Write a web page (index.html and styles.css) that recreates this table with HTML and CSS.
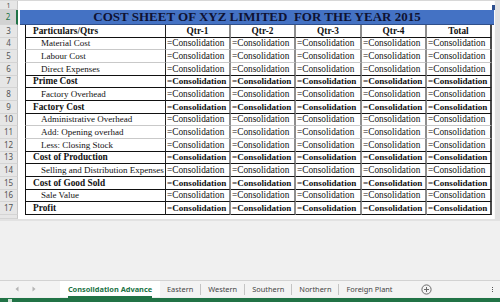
FILE: index.html
```html
<!DOCTYPE html>
<html>
<head>
<meta charset="utf-8">
<link rel="stylesheet" href="styles.css">
</head>
<body>
<div class="app">
  <div class="sheet">
    <div class="row r1"><div class="rh">1</div><div class="blank"></div><div class="edge"></div></div>
    <div class="row r2"><div class="rh sel">2</div><div class="title">COST SHEET OF XYZ LIMITED&nbsp; FOR THE YEAR 2015<span class="handle"></span></div><div class="edge"></div></div>
    <div class="row dr dk hd"><div class="rh">3</div><div class="a"></div><div class="lb b">Particulars/Qtrs</div><div class="v">Qtr-1</div><div class="v">Qtr-2</div><div class="v">Qtr-3</div><div class="v">Qtr-4</div><div class="v t">Total</div><div class="pad"></div><div class="edge"></div></div>
    <div class="row dr"><div class="rh">4</div><div class="a"></div><div class="lb s">Material Cost</div><div class="v">=Consolidation</div><div class="v">=Consolidation</div><div class="v">=Consolidation</div><div class="v">=Consolidation</div><div class="v t">=Consolidation</div><div class="pad"></div><div class="edge"></div></div>
    <div class="row dr"><div class="rh">5</div><div class="a"></div><div class="lb s">Labour Cost</div><div class="v">=Consolidation</div><div class="v">=Consolidation</div><div class="v">=Consolidation</div><div class="v">=Consolidation</div><div class="v t">=Consolidation</div><div class="pad"></div><div class="edge"></div></div>
    <div class="row dr dk"><div class="rh">6</div><div class="a"></div><div class="lb s">Direct Expenses</div><div class="v">=Consolidation</div><div class="v">=Consolidation</div><div class="v">=Consolidation</div><div class="v">=Consolidation</div><div class="v t">=Consolidation</div><div class="pad"></div><div class="edge"></div></div>
    <div class="row dr dk bo"><div class="rh">7</div><div class="a"></div><div class="lb b">Prime Cost</div><div class="v">=Consolidation</div><div class="v">=Consolidation</div><div class="v">=Consolidation</div><div class="v">=Consolidation</div><div class="v t">=Consolidation</div><div class="pad"></div><div class="edge"></div></div>
    <div class="row dr dk"><div class="rh">8</div><div class="a"></div><div class="lb s">Factory Overhead</div><div class="v">=Consolidation</div><div class="v">=Consolidation</div><div class="v">=Consolidation</div><div class="v">=Consolidation</div><div class="v t">=Consolidation</div><div class="pad"></div><div class="edge"></div></div>
    <div class="row dr dk bo"><div class="rh">9</div><div class="a"></div><div class="lb b">Factory Cost</div><div class="v">=Consolidation</div><div class="v">=Consolidation</div><div class="v">=Consolidation</div><div class="v">=Consolidation</div><div class="v t">=Consolidation</div><div class="pad"></div><div class="edge"></div></div>
    <div class="row dr"><div class="rh">10</div><div class="a"></div><div class="lb s">Administrative Overhead</div><div class="v">=Consolidation</div><div class="v">=Consolidation</div><div class="v">=Consolidation</div><div class="v">=Consolidation</div><div class="v t">=Consolidation</div><div class="pad"></div><div class="edge"></div></div>
    <div class="row dr"><div class="rh">11</div><div class="a"></div><div class="lb s">Add: Opening overhad</div><div class="v">=Consolidation</div><div class="v">=Consolidation</div><div class="v">=Consolidation</div><div class="v">=Consolidation</div><div class="v t">=Consolidation</div><div class="pad"></div><div class="edge"></div></div>
    <div class="row dr dk"><div class="rh">12</div><div class="a"></div><div class="lb s">Less: Closing Stock</div><div class="v">=Consolidation</div><div class="v">=Consolidation</div><div class="v">=Consolidation</div><div class="v">=Consolidation</div><div class="v t">=Consolidation</div><div class="pad"></div><div class="edge"></div></div>
    <div class="row dr dk bo"><div class="rh">13</div><div class="a"></div><div class="lb b">Cost of Production</div><div class="v">=Consolidation</div><div class="v">=Consolidation</div><div class="v">=Consolidation</div><div class="v">=Consolidation</div><div class="v t">=Consolidation</div><div class="pad"></div><div class="edge"></div></div>
    <div class="row dr dk"><div class="rh">14</div><div class="a"></div><div class="lb s">Selling and Distribution Expenses</div><div class="v">=Consolidation</div><div class="v">=Consolidation</div><div class="v">=Consolidation</div><div class="v">=Consolidation</div><div class="v t">=Consolidation</div><div class="pad"></div><div class="edge"></div></div>
    <div class="row dr dk bo"><div class="rh">15</div><div class="a"></div><div class="lb b">Cost of Good Sold</div><div class="v">=Consolidation</div><div class="v">=Consolidation</div><div class="v">=Consolidation</div><div class="v">=Consolidation</div><div class="v t">=Consolidation</div><div class="pad"></div><div class="edge"></div></div>
    <div class="row dr dk"><div class="rh">16</div><div class="a"></div><div class="lb s">Sale Value</div><div class="v">=Consolidation</div><div class="v">=Consolidation</div><div class="v">=Consolidation</div><div class="v">=Consolidation</div><div class="v t">=Consolidation</div><div class="pad"></div><div class="edge"></div></div>
    <div class="row dr dk bo"><div class="rh">17</div><div class="a"></div><div class="lb b">Profit</div><div class="v">=Consolidation</div><div class="v">=Consolidation</div><div class="v">=Consolidation</div><div class="v">=Consolidation</div><div class="v t">=Consolidation</div><div class="pad"></div><div class="edge"></div></div>
    <div class="row r18"><div class="rh"></div><div class="blank"></div><div class="edge"></div></div>
  </div>
  <div class="filler"></div>
  <div class="tabs">
    <div class="nav">
      <svg width="4" height="6" viewBox="0 0 4 6"><path d="M3.5 0.5 L0.5 3 L3.5 5.5 Z" fill="#b4b4b4"/></svg>
      <svg width="4" height="6" viewBox="0 0 4 6"><path d="M0.5 0.5 L3.5 3 L0.5 5.5 Z" fill="#b4b4b4"/></svg>
    </div>
    <div class="tab active"><span>Consolidation Advance</span></div>
    <div class="tab">Eastern</div>
    <div class="tab">Western</div>
    <div class="tab">Southern</div>
    <div class="tab">Northern</div>
    <div class="tab">Foreign Plant</div>
    <div class="add">
      <svg width="11" height="11" viewBox="0 0 11 11"><circle cx="5.5" cy="5.5" r="4.6" fill="none" stroke="#6a6a6a" stroke-width="1"/><path d="M5.5 3 V8 M3 5.5 H8" stroke="#6a6a6a" stroke-width="1"/></svg>
    </div>
    <div class="more"><i></i><i></i><i></i></div>
  </div>
  <div class="status"><span class="mark"></span></div>
</div>
</body>
</html>
```

FILE: styles.css
```css
* { box-sizing: border-box; }
html, body { margin: 0; padding: 0; }
body {
  width: 500px;
  height: 302px;
  overflow: hidden;
  background: #f0f0f0;
}
.app {
  display: flex;
  flex-direction: column;
  width: 500px;
  height: 302px;
}
.sheet {
  display: flex;
  flex-direction: column;
  background: #fff;
  border-top: 1px solid #d8d8d8;
}
.row {
  display: grid;
  grid-template-columns: 18px 7px 141px 65px 65px 66px 65px 65px 2px 6px;
}
.r1 { height: 9px; }
.r1 .blank, .r18 .blank { grid-column: 2 / span 8; background: #fff; }
.r2 { height: 15px; }
.dr { height: 12.67px; }
.r18 { height: 4px; overflow: hidden; }
.rh {
  background: #e6e6e6;
  border-right: 1px solid #c8c8c8;
  border-bottom: 1px solid #d4d4d4;
  font-family: "Noto Sans", sans-serif;
  font-size: 8px;
  line-height: 1;
  color: #555;
  text-align: center;
  display: flex;
  align-items: center;
  justify-content: center;
  overflow: hidden;
}
.r1 .rh { font-size: 7px; overflow: visible; }
.rh.sel {
  background: #d2d2d2;
  color: #217346;
  border-right: 2px solid #217346;
}
.edge { background: #e2e2e2; border-left: 1px solid #fafafa; }
.title {
  grid-column: 2 / span 8;
  margin-left: 2px;
  position: relative;
  background: #4472c4;
  border-bottom: 1px solid #2f4f8a;
  font-family: "Liberation Serif", "Times New Roman", serif;
  font-weight: bold;
  font-size: 13px;
  color: #0f1233;
  text-align: center;
  line-height: 14px;
  white-space: nowrap;
}
.handle {
  position: absolute;
  right: -1px;
  top: -5px;
  width: 3px;
  height: 5px;
  background: #2d4f8f;
}
.a { background: #fff; }
.pad { background: #fff; }
.lb, .v {
  font-family: "Liberation Serif", "Times New Roman", serif;
  font-size: 9.3px;
  color: #111;
  white-space: nowrap;
  overflow: hidden;
  display: flex;
  align-items: center;
  border-bottom: 1px solid #c9c9c9;
}
.lb {
  border-left: 1px solid #111;
  border-right: 1px solid #222;
  padding-left: 7px;
}
.lb.s { padding-left: 15px; font-size: 9px; }
.v {
  border-right: 2px solid #8e8e8e;
  padding-left: 1px;
}
.v.t { border-right: 2px solid #4a4a4a; }
.dk .lb, .dk .v { border-bottom: 1px solid #111; }
.bo .lb, .bo .v { font-weight: bold; }
.bo .v { font-size: 9.1px; }
.hd .lb { font-weight: bold; }
.hd .v { font-weight: bold; justify-content: center; padding-left: 0; }
.filler {
  flex: 1;
  background: #f0f0f0;
  border-top: 2px solid #e2e2e2;
}
.tabs {
  height: 17px;
  display: flex;
  align-items: stretch;
  background: #f3f3f3;
  border-top: 1px solid #d2d2d2;
  font-family: "Noto Sans", sans-serif;
  font-size: 7.4px;
  color: #444;
}
.nav {
  width: 60px;
  display: flex;
  align-items: center;
  gap: 13px;
  padding-left: 15px;
}
.tab {
  display: flex;
  align-items: center;
  padding: 0 8px 0 7px;
  position: relative;
}
.tab + .tab::before {
  content: "";
  position: absolute;
  left: -1px;
  top: 3px;
  bottom: 2px;
  width: 1px;
  background: #c4c4c4;
}
.tab.active {
  width: 100px;
  justify-content: center;
  background: #fff;
  color: #217346;
  font-weight: bold;
  padding: 0;
}
.tab.active span {
  border-bottom: 2px solid #217346;
  line-height: 13px;
  padding-top: 2px;
}
.tab.active + .tab::before { display: none; }
.tab:last-of-type::after {
  content: "";
  position: absolute;
  right: -1px;
  top: 3px;
  bottom: 2px;
  width: 1px;
  background: #c4c4c4;
}
.add {
  display: flex;
  align-items: center;
  margin-left: 20px;
}
.more {
  margin-left: auto;
  margin-right: 7px;
  display: flex;
  flex-direction: column;
  justify-content: center;
  gap: 1px;
}
.more i {
  display: block;
  width: 1px;
  height: 1px;
  background: #555;
}
.status {
  margin-top: 1px;
  height: 4px;
  background: #217346;
  position: relative;
}
.mark {
  position: absolute;
  left: 8px;
  top: 1px;
  width: 4px;
  height: 3px;
  background: #cfe3d6;
}
```
